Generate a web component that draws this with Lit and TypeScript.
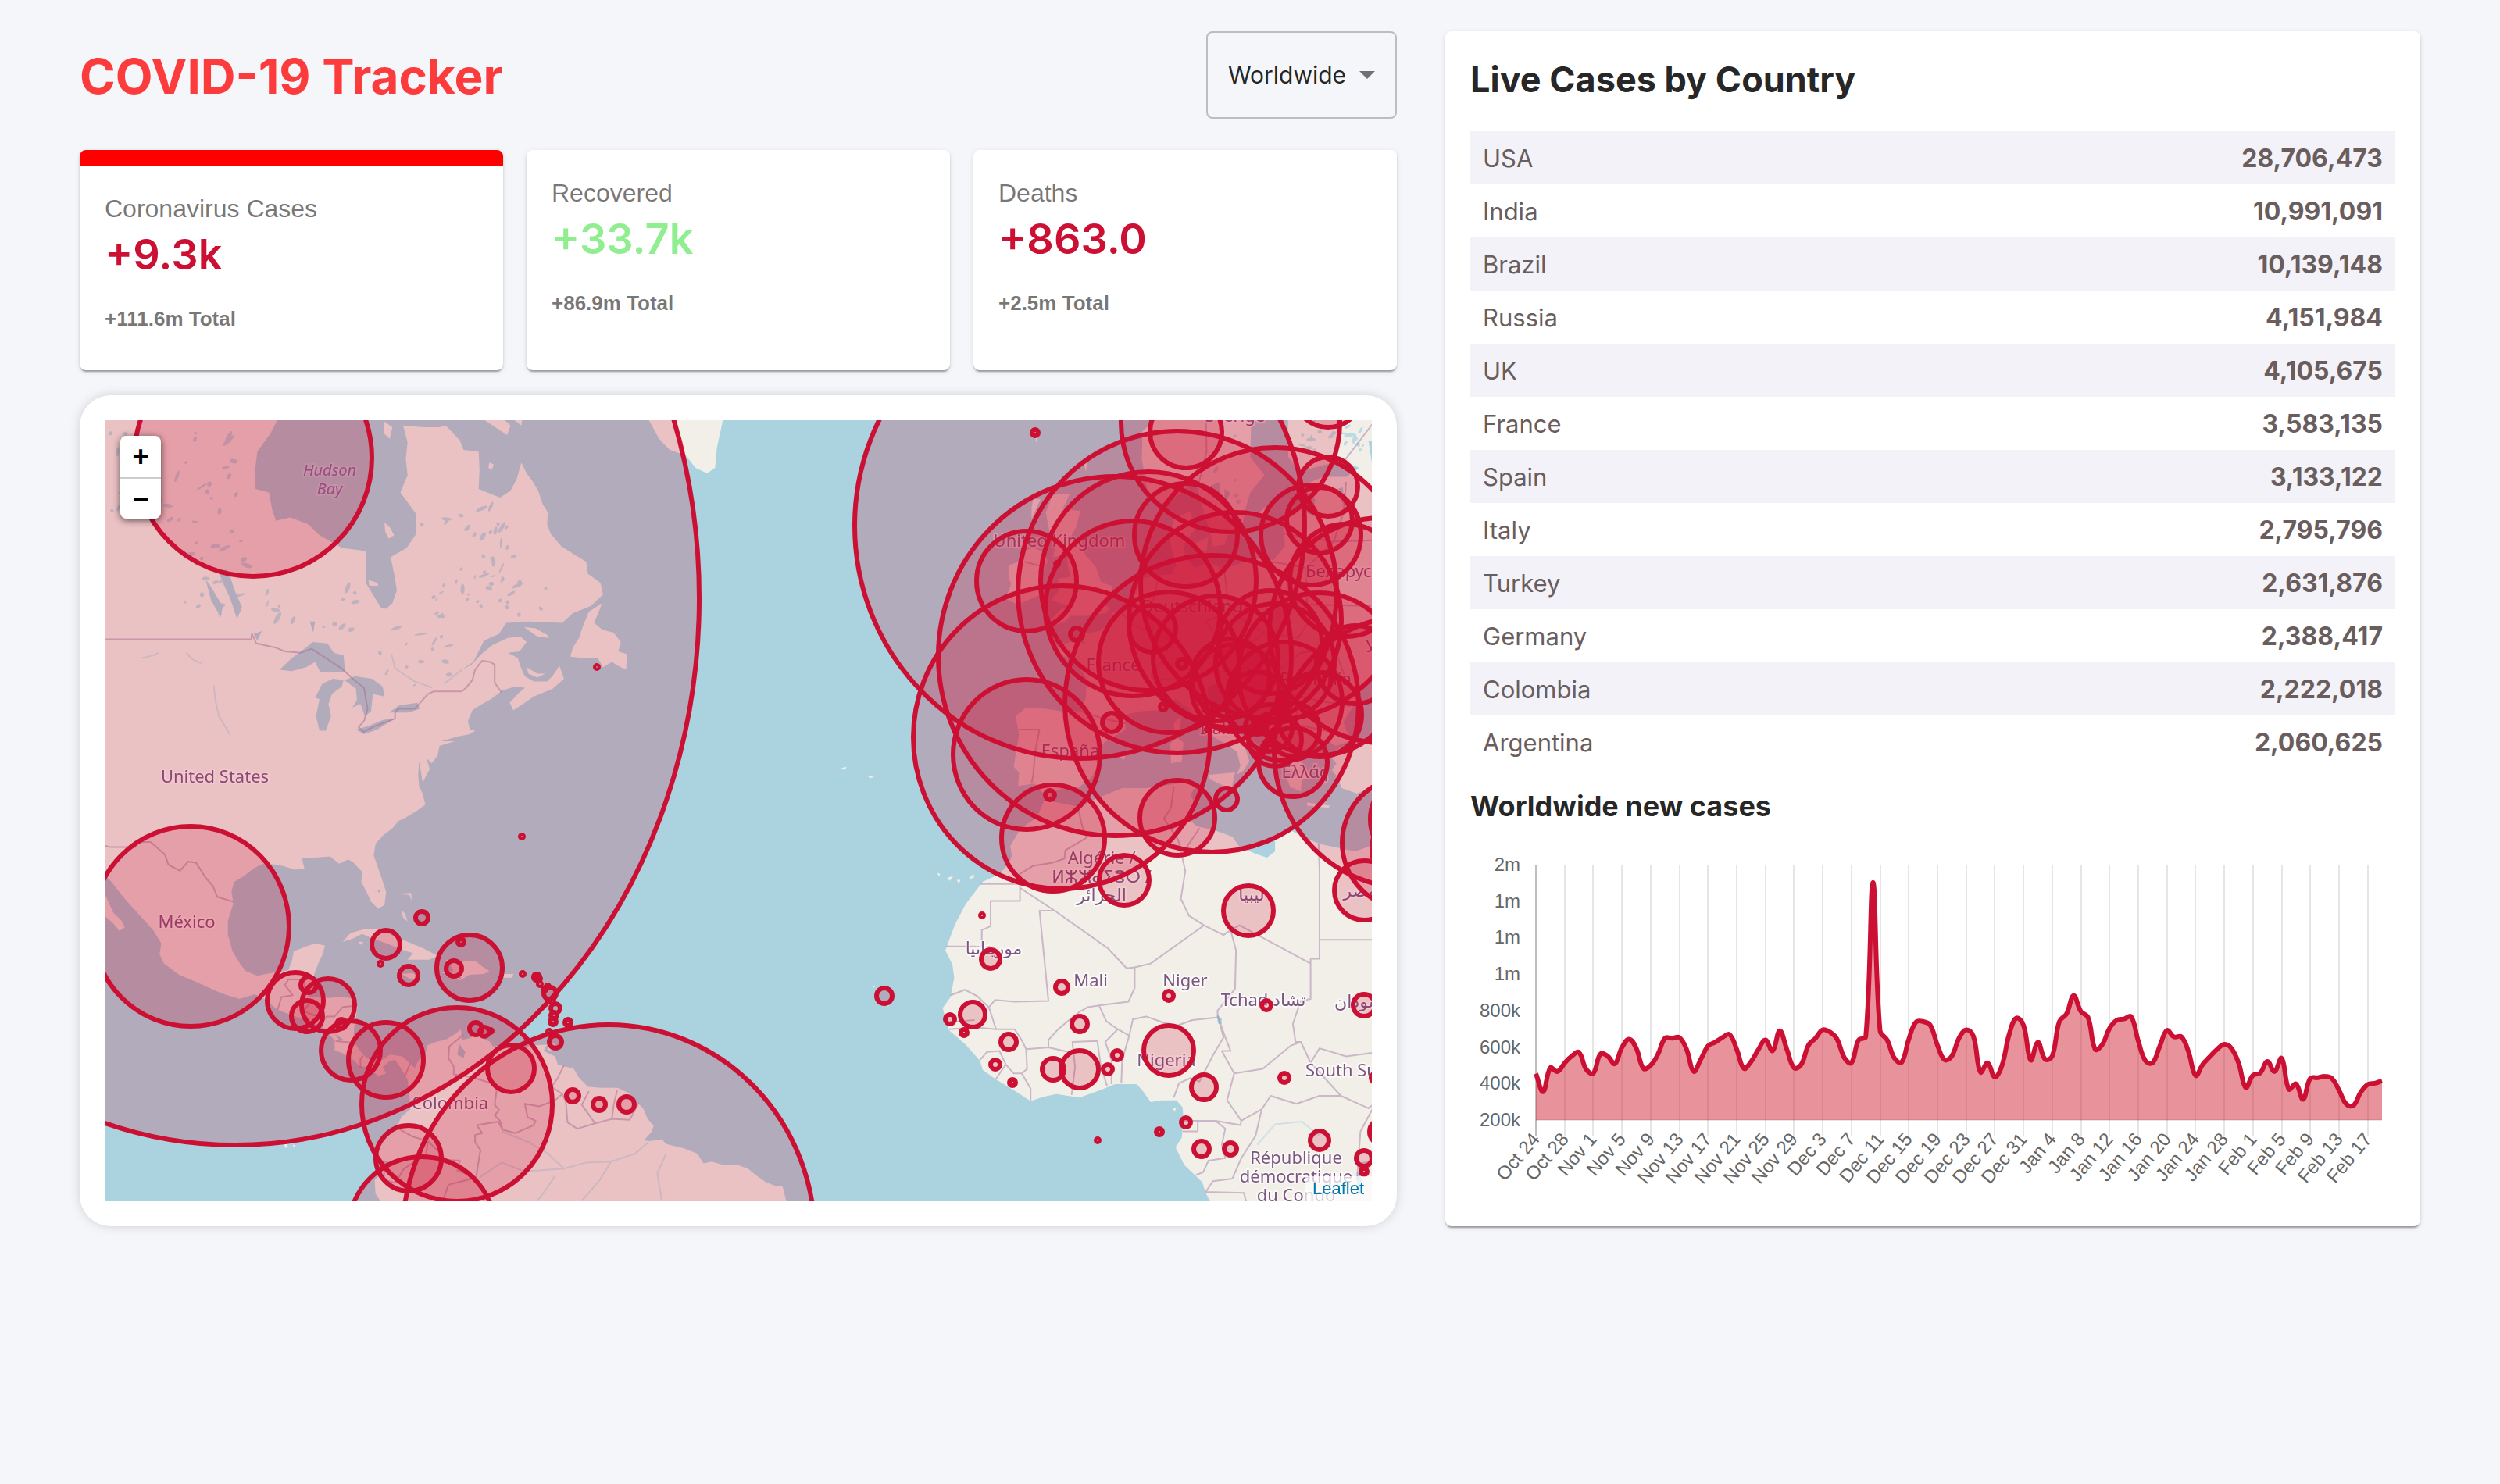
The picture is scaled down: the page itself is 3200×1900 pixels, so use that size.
import { LitElement, html, svg, css } from "lit";
import { customElement, property } from "lit/decorators.js";

type Pt = [number, number];

/* ---------- Web Mercator view, zoom 3, drawn at two units per CSS pixel ---------- */
const WORLD = 4096;
const ORIGIN_X = 810;
const ORIGIN_Y = 499;
const CENTER_LNG = -40.4796;
const CENTER_LAT = 34.80746;
const RAD = Math.PI / 180;

const merc = (lat: number) => Math.log(Math.tan(Math.PI / 4 + (lat * RAD) / 2));
const px = (lng: number) => ORIGIN_X + ((lng - CENTER_LNG) * WORLD) / 360;
const py = (lat: number) =>
  ORIGIN_Y - ((merc(lat) - merc(CENTER_LAT)) * WORLD) / (2 * Math.PI);
const unproject = (y: number) => {
  const m = merc(CENTER_LAT) - ((y - ORIGIN_Y) * 2 * Math.PI) / WORLD;
  return (2 * Math.atan(Math.exp(m)) - Math.PI / 2) / RAD;
};

/* "lng lat, lng lat, ..." to a path */
const trace = (s: string, close: boolean) =>
  s
    .split(",")
    .map((p, i) => {
      const [lng, lat] = p.trim().split(/\s+/).map(Number);
      return `${i ? "L" : "M"}${px(lng).toFixed(1)} ${py(lat).toFixed(1)}`;
    })
    .join("") + (close ? "Z" : "");

const LAND = [
  // the Americas
  "-116 66,-93 66,-92.1 62.8,-93 62,-94.5 61,-94.8 59.8,-94.7 58.9,-93.2 58.7,-92.8 57.6,-92.4 57,-90.8 57.2,-88.8 56.8,-87.5 56.1,-85 55.3,-82.3 55.1,-82.3 53,-81.5 52.2,-80.6 51.3,-80 51.2,-79.3 51.6,-78.8 52.5,-79.1 53.6,-79.5 54.7,-77.7 55.3,-76.6 56.2,-76.6 57.4,-78.4 58.7,-77.6 59.7,-77.8 60.6,-77.6 61.5,-78.1 62.4,-75.8 62.3,-74 62.3,-73.3 62.4,-71.7 61.6,-71.3 61.1,-69.6 61,-69.5 60,-69.6 58.9,-68.2 58.6,-67.2 58.4,-66 58.8,-65.3 59.5,-64.8 60.4,-64.2 59.8,-63.6 59.4,-62.9 58.8,-62.4 58,-61.8 57.5,-61.9 56.8,-61.5 56.2,-60.3 55.4,-58.9 54.9,-57.5 54.4,-57.3 53.6,-55.9 53,-55.6 52.2,-57 51.4,-59 50.9,-60.2 50.2,-64 50.3,-66.5 50.2,-67.3 49.4,-69 48.9,-70.2 47.3,-71.5 46.7,-70.4 47.1,-69.3 47.9,-68 48.6,-66.3 49.1,-64.9 49.2,-64.2 48.8,-65 48.1,-66.3 48,-65.2 47.6,-64.8 46.8,-64.4 46.2,-63.4 45.8,-61.9 45.8,-61.3 46.2,-60.5 47,-60 46,-61.3 45.2,-63.4 44.6,-64.6 44,-65.7 43.5,-66.1 44.1,-65.2 44.8,-64.4 45.3,-65.5 45.4,-66.9 45.1,-68.2 44.4,-69.2 44,-70.3 43.5,-70.8 42.6,-70.6 41.9,-70 41.8,-70.6 41.5,-72 41.3,-73.8 40.9,-72.3 40.9,-74 40.5,-74.2 39.7,-74.9 39,-75.5 39.5,-75.1 38.5,-75.9 37.3,-76.1 38.3,-76.3 39.2,-76.4 38,-76.3 37,-75.9 36.3,-75.6 35.3,-76.6 34.7,-77.8 34.1,-78.6 33.8,-79.3 33.1,-80.4 32.4,-81.2 31.6,-81.4 30.5,-80.6 28.5,-80 26.9,-80.2 25.6,-80.9 25.2,-81.7 25.9,-82.1 26.7,-82.8 27.9,-82.7 28.9,-83.8 29.9,-84.3 30.1,-85.3 29.7,-86.3 30.4,-88 30.3,-89.5 30.3,-89.2 29.2,-90.3 29.1,-91.3 29.4,-92.3 29.6,-93.8 29.7,-94.8 29.3,-96 28.5,-97.1 27.9,-97.4 27,-97.2 25.7,-97.8 24,-97.8 22.5,-97.3 20.8,-96.4 19.4,-95.8 18.7,-94.5 18.2,-93 18.5,-92 18.6,-91 18.8,-90.6 19.8,-90.4 20.8,-89 21.3,-88 21.6,-86.9 21.4,-87.1 20.6,-87.6 19.6,-88.1 18.4,-88.3 17,-88.8 15.9,-87.8 15.9,-86.5 15.8,-85.2 15.9,-84 15.8,-83.2 15,-83.4 13.8,-83.6 12.6,-83.7 11.1,-83 10.1,-82.3 9.3,-81.4 8.8,-80.2 9.1,-79.6 9.6,-78.2 9.4,-77.3 8.6,-76.8 8.1,-76.4 8.9,-75.6 9.6,-75.4 10.6,-74.4 11,-73.2 11.3,-72.2 11.9,-71.6 12.4,-71.5 11.2,-70.4 11.5,-69.9 12.1,-69.3 11.5,-68.3 11,-68 10.5,-66.2 10.6,-65 10.1,-63.8 10.6,-61.9 10.7,-62.3 10,-61 9.4,-60.7 8.5,-58.9 8,-58.3 7,-57.3 6,-55.8 5.9,-54 5.9,-52.7 5.3,-51.7 4.2,-51.1 3.6,-50.6 2.4,-49.9 1.6,-50.2 .9,-51 0,-50.4 -.1,-49 .1,-48.5 -.4,-47.8 -.6,-46.5 -.9,-45 -1.5,-44.3 -2.6,-43.4 -2.4,-42 -2.8,-40.4 -2.8,-39.3 -3.2,-38.3 -4,-37.3 -4.7,-36.3 -5.1,-35.4 -5.2,-35 -6.8,-34.8 -10,-79 -10,-80 -7.8,-81.2 -6,-81.3 -4.5,-80.3 -3.4,-79.8 -2.4,-80.9 -2.2,-80.9 -1,-80 .2,-79.6 1,-78.8 1.5,-78.3 2.6,-77.3 3.5,-77.4 5.4,-77.6 6.8,-78.3 8,-79 9,-79.6 8.9,-80.4 8.2,-80 7.5,-80.9 7.2,-82 8.2,-83 8.3,-83.7 9,-84.8 9.7,-85.8 10.1,-85.8 11.2,-87.3 12.8,-88.6 13.2,-90.2 13.8,-92.2 14.5,-93.8 15.8,-94.8 16.2,-96.5 15.7,-98.5 16.3,-101.3 17.5,-103.3 18.3,-105 19.5,-105.5 20.5,-105.3 21.6,-106.2 23,-107.7 24.5,-109.2 26,-110.4 27.3,-111 28,-112.3 29,-113 31,-116 32",
  "-116 30,-112.8 28,-111.5 26.4,-110.7 24.8,-109.8 24,-109.4 23.3,-110 22.9,-110.8 23.8,-112.1 24.8,-112.3 26,-116 28",
  // Atlantic Canada, Arctic and Greenland
  "-59.3 47.7,-59 48.4,-58.3 49.1,-57.9 49.9,-57.2 51,-55.7 51.6,-56.6 50.2,-55.7 49.7,-54.4 49.5,-53.6 48.8,-53.9 48.1,-52.9 47.9,-53 46.7,-53.9 47,-54.6 47.3,-55.6 46.9,-56.2 47.6,-57.8 47.6",
  "-64.5 49.9,-63.2 49.8,-61.8 49.3,-61.7 49.1,-63 49.2",
  "-64.2 46.9,-63 46.4,-62.1 46.4,-63 46.1,-64 46.4",
  "-78 66,-73 64,-69 62.7,-66.4 61.9,-66 62.4,-68 63.2,-66.5 63,-64.8 62.4,-64.6 63,-64 66",
  "-80.2 62.6,-79.3 62.3,-79.6 61.7,-80.3 62",
  "-80.2 56.9,-79.6 56.6,-79.1 56.1,-79.7 55.9,-80.1 56.3",
  "-82 53.2,-81 53,-80.9 52.8,-81.9 52.8",
  "-68.4 60.4,-67.9 60.3,-68.1 60,-68.5 60.1",
  "-52 65,-50.6 62.8,-49.3 61.7,-48.1 61.1,-46.3 60.8,-45.2 60.1,-43.9 59.8,-43 60.1,-42.8 61.2,-42.2 62.5,-41 65",
  // Caribbean
  "-84.9 21.8,-84 22.7,-82.5 23.1,-80.6 23.1,-79.2 22.4,-77.6 21.8,-75.8 21.1,-74.2 20.3,-75.2 19.9,-77.6 19.9,-77 20.6,-78.4 21,-79.9 21.6,-81.7 22.2,-82.7 22.6,-83.8 22.1",
  "-83.1 21.8,-82.6 21.8,-82.7 21.5,-83 21.5",
  "-74.4 18.6,-72.7 18.4,-71.7 17.7,-70.6 18.3,-69 18.4,-68.4 18.7,-69.2 19.2,-70 19.8,-71.7 19.8,-73.3 19.9,-72.7 19.2,-72.4 18.7,-73.5 18.6",
  "-78.3 18.4,-77 18.5,-76.3 18,-77.2 17.8",
  "-67.2 18.4,-65.7 18.4,-65.8 18,-67.1 18",
  "-78.3 25.1,-77.9 24.7,-77.6 23.9,-78.1 24.3",
  "-78.8 26.7,-77.2 26.8,-77.1 26,-77.4 26.6",
  "-61.8 10.8,-61 10.8,-61.1 10.1,-61.8 10.1",
  "-91.5 -.1,-91.1 -.2,-91.1 -.9,-91.4 -.8",
  "-90.5 -.5,-90.2 -.6,-90.4 -.8",
  // British Isles, Faroe
  "-5.6 50.1,-4.9 50,-3.6 50.3,-3 50.7,-1.3 50.7,1 50.9,1.4 51.3,.6 51.5,1.5 52.1,1.7 52.8,.5 53,.2 53.4,-.2 54.1,-1.3 54.8,-2 55.7,-3 56,-2.4 56.6,-1.9 57.6,-3.9 57.7,-3.1 58.6,-5 58.6,-5.8 57.5,-5.4 56.4,-4.8 55.2,-5 54.7,-3.4 54.9,-3.3 54.1,-3 53.4,-4.4 53.3,-4.3 52.5,-5.2 51.8,-3.2 51.4,-4.3 51.1",
  "-6.3 52.2,-9 51.5,-10.3 51.9,-9.7 52.9,-10 53.5,-9.9 54.2,-8.3 54.5,-8.3 55.1,-7.2 55.3,-5.9 55,-5.6 54.4,-6.2 53.6",
  "-7 62.2,-6.6 62,-6.9 61.5",
  "-7.2 58.3,-6.4 58.3,-7.4 57.1,-7.4 57.8",
  "-1.6 60.6,-1.1 60.4,-1.3 59.9",
  // continental Europe
  "5 68,7 62.9,5.1 62.1,5 60.6,5.6 58.9,7 58,8.5 58.3,10.3 59.1,10.7 59.6,11.3 58.9,12 57.5,12.7 56.3,13 55.4,14.3 55.5,14.7 56.1,16.2 56.3,16.7 57.8,17.2 58.7,18.8 59.7,17.2 60.7,17.3 62.3,18.5 63.1,20 66,24 66,21.5 63.4,21.4 61.5,21.5 60.7,22.9 59.9,25 60.2,27.6 60.5,29.5 60.1,28 59.6,25.4 59.6,23.5 59.2,23.6 58.7,24.5 58.3,24.3 57.3,22.7 57.7,21.6 57.5,21 56.6,21.1 55.4,19.8 54.5,18.6 54.7,16.5 54.4,14.2 53.9,12.6 54.4,11 54,9.9 54.7,9.7 55.5,10.9 56.4,10.5 57.6,8.6 57.1,8.1 55.8,8.9 54.2,8.4 53.6,7 53.5,5 53.3,4.4 52.3,3.4 51.5,1.7 50.9,1.5 50.2,.2 49.6,-1.2 49.4,-1.9 49.7,-1.5 48.7,-3 48.8,-4.7 48.4,-4.3 47.9,-2.5 47.4,-1.2 46,-1.3 44.5,-1.8 43.4,-4 43.4,-5.8 43.6,-8 43.7,-9.2 43,-8.8 41.5,-9.4 38.7,-8.8 38.2,-8.9 37,-7 37.2,-6.3 36.5,-5.5 36,-4.4 36.7,-2.2 36.8,-.7 37.7,.1 38.8,-.3 39.6,.8 40.8,3.2 41.9,3.1 43.1,4.8 43.4,7 43.5,8.8 44.4,10.3 43.6,11 42.4,12.5 41.5,14.2 40.8,15.7 40,16.1 38.8,15.7 38,16.5 38.4,17.1 39.2,16.6 40.4,18.4 39.9,18 40.7,16 41.5,14.2 42.4,13.5 43.7,12.4 44.6,12.4 45.4,13.7 45.6,13.9 44.9,15.2 44.1,17 43,19.4 41.9,19.4 40.5,20.9 38.8,22.8 38,21.3 37.7,21.7 36.9,22.9 36.5,23 37.5,24 37.8,22.9 39.2,22.7 40.4,23.9 40.1,24.2 40.7,26 40.9,26.8 40.5,28.9 41,28.1 41.7,27.7 42.5,28.6 43.6,29.6 44.9,31 46.5,34 46.2,34 68",
  "26.2 39.6,27.3 40.4,29.2 40.6,31.4 41.2,34 42,34 36.3,32.5 36.1,30.6 36.8,29.2 36.3,27.5 36.8,27 37.8,26.4 38.4,26.9 39",
  "12.5 38,15.5 38.2,15.1 36.7,12.6 37.6",
  "8.3 39,9.5 39.2,9.7 40.8,8.9 41.2,8.2 40.7",
  "8.7 41.6,9.3 41.5,9.4 43,8.6 42.4",
  "23.6 35.5,26.2 35.2,26 35,23.6 35.2",
  "2.4 39.6,3.2 39.9,3 39.3",
  "11 55.6,12.5 56,12.3 55.1,11.2 55.2",
  "18.2 57.5,19 57.9,18.5 57.1",
  // Africa
  "-5.9 35.8,-5.2 35.6,-2 35.1,0 35.9,2.8 36.8,5.5 36.8,9.8 37.3,11 36.9,10.5 36.2,11 35.3,10.1 34.2,11.1 33.3,13.2 32.9,15.2 32.3,16 31.3,18 30.6,19.1 30.3,20 30.9,20 32.2,21.7 32.9,23.2 32.3,25 31.6,29 30.9,31 31.5,34 31.2,34 -10,13.5 -10,12.9 -7.3,12.2 -5.9,11.8 -4.7,9.8 -2.8,8.8 -.8,9.5 .3,9.7 2.3,9.6 3.7,8.9 4.5,7.2 4.5,6 4.3,5 5.7,4.4 6.3,2 6.3,.5 5.7,-2 4.8,-4.6 5.2,-6 4.9,-7.5 4.4,-9.2 5.5,-11.5 6.9,-12.9 7.9,-13.2 8.9,-14.8 10.7,-16.7 12.3,-17.4 14.7,-16.5 15.9,-16.1 18,-16.3 19.4,-17.1 20.9,-16 23.6,-14.8 25.7,-13.5 27.2,-12.9 27.9,-11.2 28.6,-10 29.6,-9.6 30.5,-9.8 31.4,-8.6 33.1,-6.8 34.1",
  // Atlantic islands
  "-18 28.8,-17.7 28.7,-17.8 28.4",
  "-16.9 28.3,-16.2 28.5,-16.6 28",
  "-15.8 28.1,-15.4 28.1,-15.6 27.7",
  "-14.5 28.2,-13.9 28.7,-13.9 28.3",
  "-28.8 38.6,-28.2 38.7,-28.4 38.4",
  "-25.9 37.9,-25.1 37.8,-25.5 37.7",
  "-25.3 17.1,-25 17,-25.2 16.9",
  "-23.8 15.2,-23.4 15,-23.6 14.9",
  "8.5 3.6,8.9 3.7,8.7 3.2",
];

const WATER = [
  "-92 46.7,-90.6 47.6,-89 48.4,-88.3 48.8,-86.6 48.7,-85.9 48,-84.8 47.8,-84.6 46.5,-86.2 46.5,-87.4 46.5,-88 47.3,-89 46.9,-90.6 46.6",
  "-87.9 43,-87.5 41.8,-86.8 41.8,-86.2 43,-86.5 44,-86.1 44.8,-85 45.4,-84.8 45.9,-86 46,-87.2 45.6,-88 44.5,-87.5 44.4",
  "-84.7 45.9,-83.4 45.2,-83.3 44.3,-83.8 43.7,-82.9 44,-82.4 43,-81.7 43.4,-81.5 44.8,-80.2 44.6,-80.4 45.4,-81.6 46,-83.5 46.2",
  "-83.4 41.9,-82.5 41.5,-81 41.9,-79 42.8,-80.3 42.7,-82 42.2",
  "-79.7 43.3,-77.5 43.3,-76.2 43.6,-76.5 44.1,-78.5 43.9",
  "-96.8 50.5,-96.2 51.3,-97 52.4,-97.6 53.5,-98.9 53.8,-98.3 52.9,-97.6 52,-97.2 51.3",
  "-98.6 50.6,-98.4 51.4,-99.9 52.9,-100.3 53.2,-99.7 51.8",
  "-94.9 49.4,-94 49.6,-94.5 48.9",
  "-88.6 50.3,-88 50.3,-88.2 49.5",
  "-71.8 10.8,-71.1 9.9,-71.3 9.2,-72 9.6",
  "-85.9 12,-84.9 11.3,-85.2 11.1",
  "-81 27.1,-80.6 27.1,-80.8 26.8",
  "12.4 59,13.7 59.3,13.9 58.7,13 58.4",
  "14.3 58.9,14.9 58.7,14.3 57.9",
  "30.5 61.6,34 61.5,34 60,31 60",
  "27 58.9,27.6 59,27.9 57.9,27.4 58.2",
  "13.4 14,14 13.6,14 13,13.6 13",
  "29.2 -3.5,29.6 -3.6,29.9 -6,29.3 -6",
];

const BORDERS = [
  "-116 49,-95.2 49,-95.1 49.4,-94.6 48.7,-92.5 48.4,-91.4 48.1,-89.6 48,-88.4 48.3,-85 46.8,-83.6 45.9,-82.5 45.3,-82.1 43.6,-82.5 42.6,-83.1 42.1,-82.6 41.7,-81.2 42.2,-79 42.8,-79 43.3,-78.7 43.6,-76.8 43.6,-75.3 44.8,-74.7 45,-71.5 45,-71 45.3,-70.3 45.9,-70 46.7,-69.2 47.4,-68.3 47.3,-67.8 47.1,-67.8 45.7,-67 44.9",
  "-116 32.5,-111 31.3,-108.2 31.3,-108.2 31.8,-106.5 31.8,-104.9 30.6,-104.5 29.6,-103.2 29,-102.3 29.9,-101.4 29.8,-100.3 28.3,-99.5 27.5,-99 26.4,-97.2 25.9",
  "-92.2 14.5,-91.8 15.9,-90.5 16.1,-91.4 17.2,-91 17.8,-89.2 17.8,-89.2 15.9",
  "-88.2 15.7,-89.3 14.4,-87.8 13.8,-87.8 13.4",
  "-87.3 13,-86.7 13.8,-85.8 13.8,-84.9 14.8,-83.2 15",
  "-85.7 11.1,-84.7 11,-83.7 10.9",
  "-82.9 8.1,-82.9 9.1,-82.6 9.5",
  "-77.9 7.2,-77.3 8.6",
  "-71.3 11.8,-72.9 10.5,-73 9.2,-72.4 8.3,-72.4 7.4,-70.1 7,-67.5 6.2,-67.8 4,-67.3 3.4,-67.8 2.8,-67.2 2.2,-66.9 1.2,-65.5 .8,-63.4 1.7,-63.2 2.2,-64.1 2.6,-64.4 4.1,-62.8 3.8,-61 4.5,-60.2 5.2,-61.4 6,-60.7 7,-60 8.4",
  "-60.2 5.2,-59.8 4.4,-59.6 2,-58.5 1.3,-56.5 1.9,-54.6 2.4,-52.6 2.3,-51.6 4.2",
  "-57.2 5.5,-58 4,-56.5 1.9",
  "-54 5.7,-54.4 4,-54.6 2.4",
  "-66.9 1.2,-67.4 2.1,-69.8 1.7,-69.2 .8,-70 .6,-70 -.2,-69.4 -1.1,-69.9 -4.2,-72 -3.4,-71.7 -2.3,-73.2 -2.2,-75.3 -.1,-77 .4,-78.8 1.4",
  "-75.3 -.1,-75.5 -1.6,-78 -3.2,-79 -4.8,-80.3 -4.4,-80.2 -3.4",
  "-69.9 -4.2,-73 -5,-73.8 -7.3",
  "-71.7 19.8,-71.7 17.8",
  "-2.2 35.1,-1.7 33.3,-1.2 32.2,-3.6 31,-3.7 30.2,-5 29.8,-7.2 29.5,-8.7 28.7,-8.7 26,-12 26,-12 23.4,-13 23,-13 21.3,-17 21.3",
  "-13.2 27.7,-8.7 27.7",
  "-8.7 27.3,-4.8 25,-6.5 25,-5.5 15.5,-9.3 15.4,-11.5 15.6,-12.2 14.8,-11.4 12.4",
  "-16.5 16.1,-14.9 16.7,-13.5 16,-12.2 14.8",
  "-4.8 25,1.2 21.1,3.1 19.2,3.3 19,4.2 19.1,6 19.5,12 23.5,10.3 24.5,9.4 26.2,9.9 29,9.1 32,7.5 34,8.3 35,8.6 36.9",
  "11.5 33.1,10.2 31.5,9.5 30.2",
  "12 23.5,14.2 22.5,15 23,16 23.5,24 19.5",
  "24.9 31.6,25 29,25 20,24 20,24 15.7,22.9 15.5,22 13,22.3 11,22.9 11",
  "25 22,34 22",
  "15 23,15.6 20.9,15.5 16.8,13.5 14.4,13.6 13.7,14.4 11.5,15 10,14 10",
  "4.2 19.1,4.2 16.9,3.5 15.4,.2 15,-1.1 14.8,-2 14.3,-3.3 13.3,-4.4 12.4,-5.5 11.2,-5.5 10.4,-2.8 9.8",
  ".2 15,1 13.3,2.3 12.4,3.6 11.7,2.8 9,2.7 6.4",
  "3.6 11.7,4 13.5,5.5 13.8,7.5 13.1,9 12.8,10.7 13.4,13.6 13.7",
  "2.3 12.4,.9 11,1.6 9,1.6 6.3",
  "-2.9 5.1,-2.5 8.2,-2.8 11,0 11.1,.4 8.3,1.1 6.1",
  "-5.5 10.4,-8 10.2,-7.9 8,-8.5 7.5,-7.5 5.8,-7.5 4.4",
  "-8 10.2,-8.5 11.2,-9.3 12.4,-11.4 12.4,-13.7 12.6,-16.7 12.4",
  "-16.6 13.2,-13.8 13.4",
  "-13.2 9,-12.4 9.9,-11 10,-10.3 8.5,-11.4 6.9",
  "-10.3 8.5,-9.4 7.5,-8.5 7.5",
  "8.6 4.8,9.2 6.4,10.5 7,11.5 6.6,13 9.5,14.2 11.5,13.6 13.7",
  "14 10,15.4 7.5,15 6,14.6 4.5,16.2 2.2,16.1 1.7,13.3 2.2,9.8 2.2",
  "15.4 7.5,18.6 8,21.8 10.6,22.9 11,24 8.7,25 10.3,28 9.4,31 9.8",
  "24 8.7,27.4 5,25 5,22.4 4.1,19.5 5,18.5 3.5,16.2 2.2",
  "27.4 5,30.5 3.6,31 4",
  "11.3 2.2,11.3 1,9.6 1",
  "13.3 2.2,14.4 1.3,14 -.5,14.4 -2,12.5 -2.3,11.9 -3.6,11.1 -3.9",
  "18.5 3.5,17.8 .5,16.2 -2,15.2 -4.3,13 -4.6,12.2 -5.8,16.5 -5.9,17 -8",
  "29 -1.5,30.5 -1.1,30.8 -2.4,29 -2.7",
  "31 3.6,29.6 1,29.2 -4.5",
  "-1.8 43.4,.7 42.8,3.2 42.4",
  "-8.8 41.9,-6.5 41.9,-7 40,-7.2 38,-7.4 37.2",
  "7.5 43.8,7 45,6.1 46.3,7.6 47.6,8.2 49,6.2 49.5,4 50,2.5 51.1",
  "14.3 53.9,14.8 51,12.2 50.3,13.8 48.7,13 47.6,7.6 47.6",
  "19.8 54.4,23.5 54,23.6 51.5,24 50.5,22.6 49.1,18.8 49.5,14.8 51",
  "13.8 48.7,17 48.6,18.8 49.5",
  "17 48.6,16.5 46.9,13.7 46.5,7 45.9",
  "16.5 46.9,19 45.9,22.9 48,26.7 48.3,28.2 45.5",
  "19 45.9,22.5 44.6,28.5 43.8",
  "22.5 44.6,22.4 42.3,26.2 41.7",
  "23.6 51.5,30.8 51.4",
  "23.5 54,26.6 55.7,32 55.8",
  "21 56.2,26.6 55.7,27.7 57.5,28 59.3",
  "11.3 59,12.3 61,12.2 63",
  "27.8 60.5,31 62.5,34 64",
  "6.9 53.4,6 51,6.2 49.5",
  "-8.2 54.4,-6.2 54.1",
];

const RIVERS = [
  "-50.5 -.2,-52 -1.5,-54.7 -2.4,-57.5 -2.5,-60 -3.2,-64.5 -3.5,-67 -2.5,-69.5 -4.2",
  "-60 -3.2,-61.8 -1.5,-64 -.2,-67 1",
  "-48.5 -1.5,-49.5 -3.7,-49 -6.8",
  "-54.7 -2.4,-56 -4.5,-58 -6.8",
  "-61 -4,-62 -5.5,-63 -6.8",
  "-99.4 45.5,-99.2 44.2,-98.8 43,-97.6 41.5",
  "-107.5 47.6,-106.2 47.8,-105.6 48",
  "-102.5 48,-101.8 47.5,-100.8 47.2",
  "-74.8 45.3,-76.8 45.8,-79 46.8,-79.4 47.9",
  "-71.5 46.7,-73.5 45.6",
  "18 -.5,20 1.8,23 2.1,25 .5",
];

/* Small lakes scattered over the shield: lng min, lng max, lat min, lat max, count */
const LAKE_FIELDS: number[][] = [
  [-111, -96, 56, 62.5, 32],
  [-103, -92, 51, 56, 22],
  [-93, -83, 49.5, 53.5, 10],
  [-76, -65, 50.5, 58, 36],
  [-75, -62, 51, 54, 16],
  [-81, -72, 45.5, 50, 14],
  [23, 30, 61, 62.6, 26],
  [13, 16, 58, 62, 8],
];

const lakeSpecks = () => {
  let seed = 7;
  const rnd = () => (seed = (seed * 16807) % 2147483647) / 2147483647;
  return LAKE_FIELDS.flatMap(([w, e, s, n, count]) =>
    Array.from({ length: count }, () => {
      const x = px(w + (e - w) * rnd());
      const y = py(s + (n - s) * rnd());
      const a = 2 + rnd() * rnd() * 8;
      const b = 1 + rnd() * 2;
      const t = -90 + rnd() * 110;
      return svg`<ellipse cx=${x.toFixed(1)} cy=${y.toFixed(1)} rx=${a.toFixed(1)} ry=${b.toFixed(1)}
        transform=${`rotate(${t.toFixed(0)} ${x.toFixed(1)} ${y.toFixed(1)})`}></ellipse>`;
    })
  );
};

interface Label {
  x: number;
  y: number;
  t: string;
  a?: string;
  i?: boolean;
}
const LABELS: Label[] = [
  { x: 141, y: 464, t: "United States" },
  { x: 288, y: 71, t: "Hudson", i: true },
  { x: 288, y: 95, t: "Bay", i: true },
  { x: 105, y: 650, t: "México" },
  { x: 442, y: 882, t: "Colombia" },
  { x: 1222, y: 162, t: "United Kingdom" },
  { x: 1447, y: 2, t: "Sverige" },
  { x: 1537, y: 201, t: "Беларусь", a: "start" },
  { x: 1392, y: 246, t: "Deutschland" },
  { x: 1291, y: 321, t: "France" },
  { x: 1236, y: 431, t: "España" },
  { x: 1402, y: 402, t: "Italia", a: "start" },
  { x: 1536, y: 458, t: "Ελλάς" },
  { x: 1614, y: 297, t: "Україна", a: "start" },
  { x: 1550, y: 339, t: "România" },
  { x: 1276, y: 568, t: "Algérie /" },
  { x: 1276, y: 592, t: "ⵍⵣⵣⴰⵢⴻⵔ /" },
  { x: 1276, y: 616, t: "الجزائر" },
  { x: 1138, y: 684, t: "موريتانيا" },
  { x: 1262, y: 725, t: "Mali" },
  { x: 1383, y: 725, t: "Niger" },
  { x: 1483, y: 750, t: "Tchad تشاد" },
  { x: 1468, y: 615, t: "ليبيا" },
  { x: 1607, y: 610, t: "مصر" },
  { x: 1612, y: 752, t: "السودان" },
  { x: 1359, y: 827, t: "Nigeria" },
  { x: 1537, y: 840, t: "South Sudan", a: "start" },
  { x: 1525, y: 952, t: "République" },
  { x: 1525, y: 976, t: "démocratique" },
  { x: 1525, y: 1000, t: "du Congo" },
];

/* lat, lng, confirmed cases */
const CASES: number[][] = [
  [38, -97, 28706473], [-10, -55, 10139148], [54, -2, 4105675], [46, 2, 3583135],
  [40, -4, 3133122], [42.8333, 12.8333, 2795796], [39, 35, 2631876], [51, 9, 2388417],
  [4, -72, 2222018], [23, -102, 2030491], [52, 20, 1631858], [49, 32, 1304000],
  [-10, -76, 1269523], [49.75, 15.5, 1148340], [52.5, 5.75, 1049000], [60, -95, 842500],
  [39.5, -8, 797525], [46, 25, 775678], [31.5, 34.75, 745000], [50.8333, 4, 748000],
  [62, 15, 631166], [47, 8, 549000], [44, 21, 433000], [47, 20, 403000],
  [47.3333, 13.3333, 443000], [32, -5, 481155], [31, 36, 364000], [33.8333, 35.8333, 354000],
  [48.6667, 19.5, 290000], [-2, -77.5, 273097], [53, 28, 275800], [45.1667, 15.5, 239800],
  [43, 25, 236600], [19, -70.6667, 235300], [34, 9, 228900], [53, -8, 214378],
  [56, 10, 206900], [10, -84, 202300], [56, 24, 193200], [46, 15, 184500],
  [39, 22, 179800], [27, 30, 178000], [15.5, -90.25, 171300], [47, 29, 177000],
  [15, -86.5, 164500], [9, -80, 336300], [10, 8, 151500], [25, 17, 130000],
  [8, -66, 135600], [44, 18, 128100], [28, 3, 112000], [41, 20, 101300],
  [41.8333, 22, 99400], [8, -2, 81200], [57, 25, 79800], [62, 10, 68300],
  [42, 19.3, 71700], [13.8333, -88.9167, 59000], [59, 26, 57600], [49.75, 6.1667, 54000],
  [64, 26, 53500], [21.5, -80, 45300], [14, -14, 32900], [8, -5, 31800],
  [6, 12, 33700], [15, 30, 30200], [0, 25, 25200], [35.8333, 14.5833, 21400],
  [18.25, -77.5, 20900], [19, -72.4167, 12200], [20, -12, 17100], [11, -10, 15200],
  [16, -24, 14800], [-1, 11.75, 13500], [13, -2, 11800], [42.5, 1.6, 10600],
  [17.25, -88.75, 12200], [5, -59, 8300], [4, -56, 8900], [4, -53, 16500],
  [-1, 15, 8700], [17, -4, 8200], [24.25, -76, 8400], [11, -61, 7700],
  [13, -85, 6400], [8, 1.1667, 6100], [9.5, 2.25, 5200], [62, -7, 654],
  [49.3723, -2.3644, 4000], [54.2361, -4.5481, 440], [36.1408, -5.3536, 4230],
  [43.7667, 12.4167, 3500], [47.14, 9.55, 2500], [43.7333, 7.4, 1900], [41.9, 12.45, 27],
  [13.4667, -16.5667, 4500], [12, -15, 3100], [8.5, -11.5, 3860], [6.5, -9.5, 1980],
  [16, 8, 4720], [15, 19, 3800], [7, 21, 5000], [7, 31.3, 6900], [1, 32, 40000],
  [-2, 30, 17800], [-3.5, 30, 2000], [2, 10, 5800], [1, 7, 1600], [0, 0, 712],
  [24.5, -13, 10], [46.8852, -56.3159, 24], [21.75, -71.5833, 2000], [19.5, -80.6667, 430],
  [32.3333, -64.75, 700], [18.4207, -64.64, 150], [18.25, -63.1667, 18], [18.0425, -63.0548, 2000],
  [18.0708, -63.0501, 1400], [17.9, -62.8333, 500], [17.3333, -62.75, 41], [17.05, -61.8, 600],
  [16.75, -62.2, 20], [16.25, -61.5833, 9400], [15.4167, -61.3333, 130], [14.6667, -61, 6500],
  [13.8833, -61.1333, 3200], [13.25, -61.2, 1500], [13.1667, -59.5333, 2600],
  [12.1167, -61.6667, 148], [12.5, -69.9667, 7600], [12.1167, -68.9333, 4650],
  [12.1784, -68.2385, 400],
];

/* Geodesic circle on the Mercator plane */
const caseCircle = ([lat, lng, cases]: number[]) => {
  const latR = (Math.sqrt(cases) * 800) / 6371000 / RAD;
  const top = py(lat + latR);
  const mid = (top + py(lat - latR)) / 2;
  const lat2 = unproject(mid);
  const lngR =
    Math.acos(
      (Math.cos(latR * RAD) - Math.sin(lat * RAD) * Math.sin(lat2 * RAD)) /
        (Math.cos(lat * RAD) * Math.cos(lat2 * RAD))
    ) / RAD;
  const snap = (v: number) => 2 * Math.max(Math.round(v / 2), 1);
  return svg`<ellipse cx=${Math.round(px(lng))} cy=${Math.round(mid)}
    rx=${snap((lngR * WORLD) / 360)} ry=${snap(mid - top)}></ellipse>`;
};

@customElement("case-map")
export class CaseMap extends LitElement {
  static styles = css`
    :host {
      display: block;
      background: #fff;
      padding: 32px;
      border-radius: 40px;
      box-shadow: 0 0 16px -2px rgba(0, 0, 0, 0.2);
    }
    .frame {
      position: relative;
      display: block;
      overflow: hidden;
    }
    .canvas {
      display: block;
      width: 100%;
      height: auto;
      background: #aad3df;
    }
    .land {
      fill: #f2efe9;
    }
    .water {
      fill: #aad3df;
    }
    .specks {
      fill: #aad3df;
      opacity: 0.75;
    }
    .river {
      fill: none;
      stroke: #aad3df;
      stroke-width: 2;
      opacity: 0.5;
    }
    .border {
      fill: none;
      stroke: #a27fa5;
      stroke-width: 2;
      stroke-linejoin: round;
      opacity: 0.5;
    }
    .label {
      font: 400 22px "Noto Sans", "DejaVu Sans", sans-serif;
      fill: #7c5682;
      stroke: rgba(255, 255, 255, 0.6);
      stroke-width: 4;
      stroke-linejoin: round;
      paint-order: stroke;
      text-anchor: middle;
    }
    .label.start {
      text-anchor: start;
    }
    .label.sea {
      font-size: 20px;
      font-style: italic;
      fill: #7d6fae;
      stroke: rgba(255, 255, 255, 0.2);
    }
    .cases {
      fill: #cc1034;
      fill-opacity: 0.2;
      stroke: #cc1034;
      stroke-width: 6;
    }
    .zoom {
      position: absolute;
      top: 20px;
      left: 20px;
      display: flex;
      flex-direction: column;
      border-radius: 8px;
      box-shadow: 0 2px 10px rgba(0, 0, 0, 0.65);
      overflow: hidden;
    }
    .step {
      width: 52px;
      height: 53px;
      padding: 0;
      border: 0;
      background: #fff;
      color: #000;
      font: 700 36px/54px "Liberation Sans", Arial, sans-serif;
    }
    .step + .step {
      border-top: 2px solid #ccc;
    }
    .credit {
      position: absolute;
      right: 0;
      bottom: 0;
      padding: 0 10px;
      background: rgba(255, 255, 255, 0.7);
      font: 22px/32px "Liberation Sans", Arial, sans-serif;
    }
    .credit-link {
      color: #0078a8;
      text-decoration: none;
    }
  `;

  render() {
    return html`
      <div class="frame">
        <svg class="canvas" viewBox="0 0 1622 1000" role="img" aria-label="Map of cases">
          <path class="land" d=${LAND.map((s) => trace(s, true)).join("")}></path>
          <path class="river" d=${RIVERS.map((s) => trace(s, false)).join("")}></path>
          <path class="water" d=${WATER.map((s) => trace(s, true)).join("")}></path>
          <g class="specks">${lakeSpecks()}</g>
          <path class="border" d=${BORDERS.map((s) => trace(s, false)).join("")}></path>
          ${LABELS.map(
            (l) => svg`<text class=${`label ${l.a ?? ""} ${l.i ? "sea" : ""}`} x=${l.x} y=${l.y}>${l.t}</text>`
          )}
          <g class="cases">${CASES.map(caseCircle)}</g>
        </svg>
        <div class="zoom">
          <button class="step" aria-label="Zoom in">+</button>
          <button class="step" aria-label="Zoom out">−</button>
        </div>
        <div class="credit"><a class="credit-link" href="https://leafletjs.com">Leaflet</a></div>
      </div>
    `;
  }
}

/* ---------- daily new cases ---------- */
/* Depth of each day's sample; AXIS_HIGH is the 1.6m line and AXIS_LOW the 200k line. */
const AXIS_HIGH = 320;
const AXIS_LOW = 1147;
const DAILY = [
  997, 1055, 978, 990, 963, 940, 928, 982, 996, 933, 940, 965, 912, 885, 915, 980, 970, 935, 882, 882,
  880, 917, 990, 950, 907, 895, 880, 870, 918, 980, 958, 920, 888, 923, 858, 918, 978, 967, 905, 882,
  855, 862, 885, 945, 962, 888, 877, 378, 858, 888, 947, 960, 885, 830, 828, 840, 905, 952, 940, 882,
  855, 875, 992, 962, 1008, 970, 870, 817, 840, 953, 895, 950, 940, 828, 803, 744, 795, 815, 918, 902,
  850, 824, 820, 812, 890, 955, 962, 908, 857, 878, 877, 925, 1003, 967, 942, 918, 902, 915, 962, 1042,
  1002, 995, 957, 990, 947, 1047, 1030, 1080, 1012, 1010, 1005, 1012, 1050, 1095, 1100, 1058, 1032,
  1028, 1020,
];
const X_LABELS = [
  "Oct 24", "Oct 28", "Nov 1", "Nov 5", "Nov 9", "Nov 13", "Nov 17", "Nov 21", "Nov 25", "Nov 29",
  "Dec 3", "Dec 7", "Dec 11", "Dec 15", "Dec 19", "Dec 23", "Dec 27", "Dec 31", "Jan 4", "Jan 8",
  "Jan 12", "Jan 16", "Jan 20", "Jan 24", "Jan 28", "Feb 1", "Feb 5", "Feb 9", "Feb 13", "Feb 17",
];
const Y_LABELS = ["2m", "1m", "1m", "1m", "800k", "600k", "400k", "200k"];

const PLOT = { left: 84, right: 1167, top: 27, bottom: 354 };

const smoothLine = (pts: Pt[]) => {
  const clampY = (y: number) => Math.min(Math.max(y, PLOT.top), PLOT.bottom);
  const control = pts.map((p, i) => {
    const a = pts[i - 1] ?? p;
    const b = pts[i + 1] ?? p;
    const da = Math.hypot(p[0] - a[0], p[1] - a[1]);
    const db = Math.hypot(b[0] - p[0], b[1] - p[1]);
    const fa = (0.4 * da) / (da + db || 1);
    const fb = (0.4 * db) / (da + db || 1);
    return {
      before: [p[0] - fa * (b[0] - a[0]), clampY(p[1] - fa * (b[1] - a[1]))],
      after: [p[0] + fb * (b[0] - a[0]), clampY(p[1] + fb * (b[1] - a[1]))],
    };
  });
  return pts
    .map((p, i) =>
      i
        ? `C${[...control[i - 1].after, ...control[i].before, ...p].map((n) => n.toFixed(1)).join(" ")}`
        : `M${p[0]} ${p[1].toFixed(1)}`
    )
    .join("");
};

@customElement("case-chart")
export class CaseChart extends LitElement {
  static styles = css`
    :host {
      display: block;
    }
    .plot {
      display: block;
      width: 100%;
      height: auto;
    }
    .grid {
      stroke: rgba(0, 0, 0, 0.1);
      stroke-width: 2;
    }
    .axis {
      stroke: rgba(0, 0, 0, 0.25);
      stroke-width: 2;
    }
    .tick {
      font: 24px "Liberation Sans", Arial, sans-serif;
      fill: #666;
      text-anchor: end;
    }
    .area {
      fill: rgba(209, 38, 55, 0.5);
    }
    .line {
      fill: none;
      stroke: #cc1034;
      stroke-width: 6;
      stroke-linejoin: round;
    }
  `;

  render() {
    const step = (PLOT.right - PLOT.left) / (DAILY.length - 1);
    const span = PLOT.bottom - PLOT.top;
    const pts = DAILY.map(
      (v, i): Pt => [
        Math.round((PLOT.left + i * step) * 10) / 10,
        PLOT.top + ((v - AXIS_HIGH) / (AXIS_LOW - AXIS_HIGH)) * span,
      ]
    );
    const line = smoothLine(pts);
    return html`
      <svg class="plot" viewBox="0 0 1184 458" role="img" aria-label="Worldwide new cases per day">
        ${X_LABELS.map((t, i) => {
          const x = Math.round(PLOT.left + i * 4 * step);
          return svg`
            <line class=${i ? "grid" : "axis"} x1=${x} x2=${x} y1=${PLOT.top} y2=${PLOT.bottom + 20}></line>
            <text class="tick" transform=${`translate(${x + 6} ${PLOT.bottom + 25}) rotate(-50)`}>${t}</text>`;
        })}
        <line class="grid" x1=${PLOT.left} x2=${PLOT.right} y1=${PLOT.bottom} y2=${PLOT.bottom}></line>
        ${Y_LABELS.map(
          (t, i) => svg`<text class="tick" x="64" y=${Math.round(PLOT.top + (i * span) / 7) + 8}>${t}</text>`
        )}
        <path class="area" d=${`${line}L${PLOT.right} ${PLOT.bottom}L${PLOT.left} ${PLOT.bottom}Z`}></path>
        <path class="line" d=${line}></path>
      </svg>
    `;
  }
}

@customElement("info-box")
export class InfoBox extends LitElement {
  @property() heading = "";
  @property() today = "";
  @property() total = "";

  static styles = css`
    :host {
      display: block;
      box-sizing: border-box;
      padding: 32px 32px 46px;
      background: #fff;
      border-radius: 8px;
      box-shadow: 0 4px 2px -2px rgba(0, 0, 0, 0.2), 0 2px 2px rgba(0, 0, 0, 0.14),
        0 2px 6px rgba(0, 0, 0, 0.12);
    }
    :host([active]) {
      border-top: 20px solid red;
    }
    .heading,
    .today,
    .total {
      margin: 0;
    }
    .heading {
      font: 400 32px/46px "Liberation Sans", Arial, sans-serif;
      color: rgba(0, 0, 0, 0.54);
    }
    .today {
      font: 600 54px/72px Inter, sans-serif;
      color: #cc1034;
    }
    :host([good]) .today {
      color: lightgreen;
    }
    .total {
      margin-top: 26px;
      font: 700 26px/40px "Liberation Sans", Arial, sans-serif;
      color: rgba(0, 0, 0, 0.54);
    }
  `;

  render() {
    return html`
      <p class="heading">${this.heading}</p>
      <h2 class="today">${this.today}</h2>
      <p class="total">${this.total} Total</p>
    `;
  }
}

const COUNTRIES: [string, string][] = [
  ["USA", "28,706,473"],
  ["India", "10,991,091"],
  ["Brazil", "10,139,148"],
  ["Russia", "4,151,984"],
  ["UK", "4,105,675"],
  ["France", "3,583,135"],
  ["Spain", "3,133,122"],
  ["Italy", "2,795,796"],
  ["Turkey", "2,631,876"],
  ["Germany", "2,388,417"],
  ["Colombia", "2,222,018"],
  ["Argentina", "2,060,625"],
];

@customElement("app-root")
export class AppRoot extends LitElement {
  static styles = css`
    :host {
      display: block;
      box-sizing: border-box;
      min-height: 100vh;
      padding: 40px 102px;
      background: #f5f6fa;
      font-family: Inter, sans-serif;
      color: rgba(0, 0, 0, 0.87);
    }
    .page {
      display: grid;
      grid-template-columns: 1686fr 1248fr;
      gap: 62px;
    }
    .main {
      display: flex;
      flex-direction: column;
    }
    .header {
      display: flex;
      align-items: center;
      justify-content: space-between;
      margin-bottom: 40px;
    }
    .title {
      margin: 0;
      padding-top: 4px;
      font-size: 62px;
      font-weight: 700;
      line-height: 72px;
      color: #fc3c3c;
    }
    .picker {
      position: relative;
      display: block;
    }
    .select {
      display: block;
      appearance: none;
      height: 112px;
      padding: 0 62px 0 26px;
      border: 2px solid rgba(0, 0, 0, 0.23);
      border-radius: 8px;
      background: transparent;
      font: 400 30px/40px Inter, sans-serif;
      color: rgba(0, 0, 0, 0.87);
    }
    .arrow {
      position: absolute;
      right: 28px;
      top: 51px;
      width: 20px;
      height: 10px;
      fill: rgba(0, 0, 0, 0.54);
      pointer-events: none;
    }
    .stats {
      display: grid;
      grid-template-columns: repeat(3, 1fr);
      gap: 30px;
      margin-bottom: 32px;
    }
    .side {
      padding: 32px;
      background: #fff;
      border-radius: 8px;
      box-shadow: 0 4px 2px -2px rgba(0, 0, 0, 0.2), 0 2px 2px rgba(0, 0, 0, 0.14),
        0 2px 6px rgba(0, 0, 0, 0.12);
    }
    .side-title {
      margin: 0 0 38px;
      padding-top: 2px;
      font-size: 45px;
      font-weight: 700;
      line-height: 56px;
    }
    .chart-title {
      margin: 24px 0;
      font-size: 36px;
      font-weight: 700;
      line-height: 48px;
    }
    .table {
      width: 100%;
      border-collapse: collapse;
      font-size: 31px;
      line-height: 36px;
      color: #6a5d5d;
    }
    .row:nth-of-type(odd) {
      background: #f3f2f8;
    }
    .country,
    .count {
      padding: 17px 16px 15px;
      font-weight: 400;
      text-align: left;
    }
    .count {
      font-size: 32px;
      font-weight: 700;
      text-align: right;
    }
  `;

  render() {
    return html`
      <div class="page">
        <main class="main">
          <header class="header">
            <h1 class="title">COVID-19 Tracker</h1>
            <label class="picker">
              <select class="select" aria-label="Region">
                <option>Worldwide</option>
              </select>
              <svg class="arrow" viewBox="0 0 20 10" aria-hidden="true"><path d="M0 0h20L10 10z"></path></svg>
            </label>
          </header>
          <section class="stats">
            <info-box active heading="Coronavirus Cases" today="+9.3k" total="+111.6m"></info-box>
            <info-box good heading="Recovered" today="+33.7k" total="+86.9m"></info-box>
            <info-box heading="Deaths" today="+863.0" total="+2.5m"></info-box>
          </section>
          <case-map></case-map>
        </main>
        <aside class="side">
          <h2 class="side-title">Live Cases by Country</h2>
          <table class="table">
            <tbody>
              ${COUNTRIES.map(
                ([name, count]) => html`<tr class="row">
                  <th class="country" scope="row">${name}</th>
                  <td class="count">${count}</td>
                </tr>`
              )}
            </tbody>
          </table>
          <h3 class="chart-title">Worldwide new cases</h3>
          <case-chart></case-chart>
        </aside>
      </div>
    `;
  }
}
